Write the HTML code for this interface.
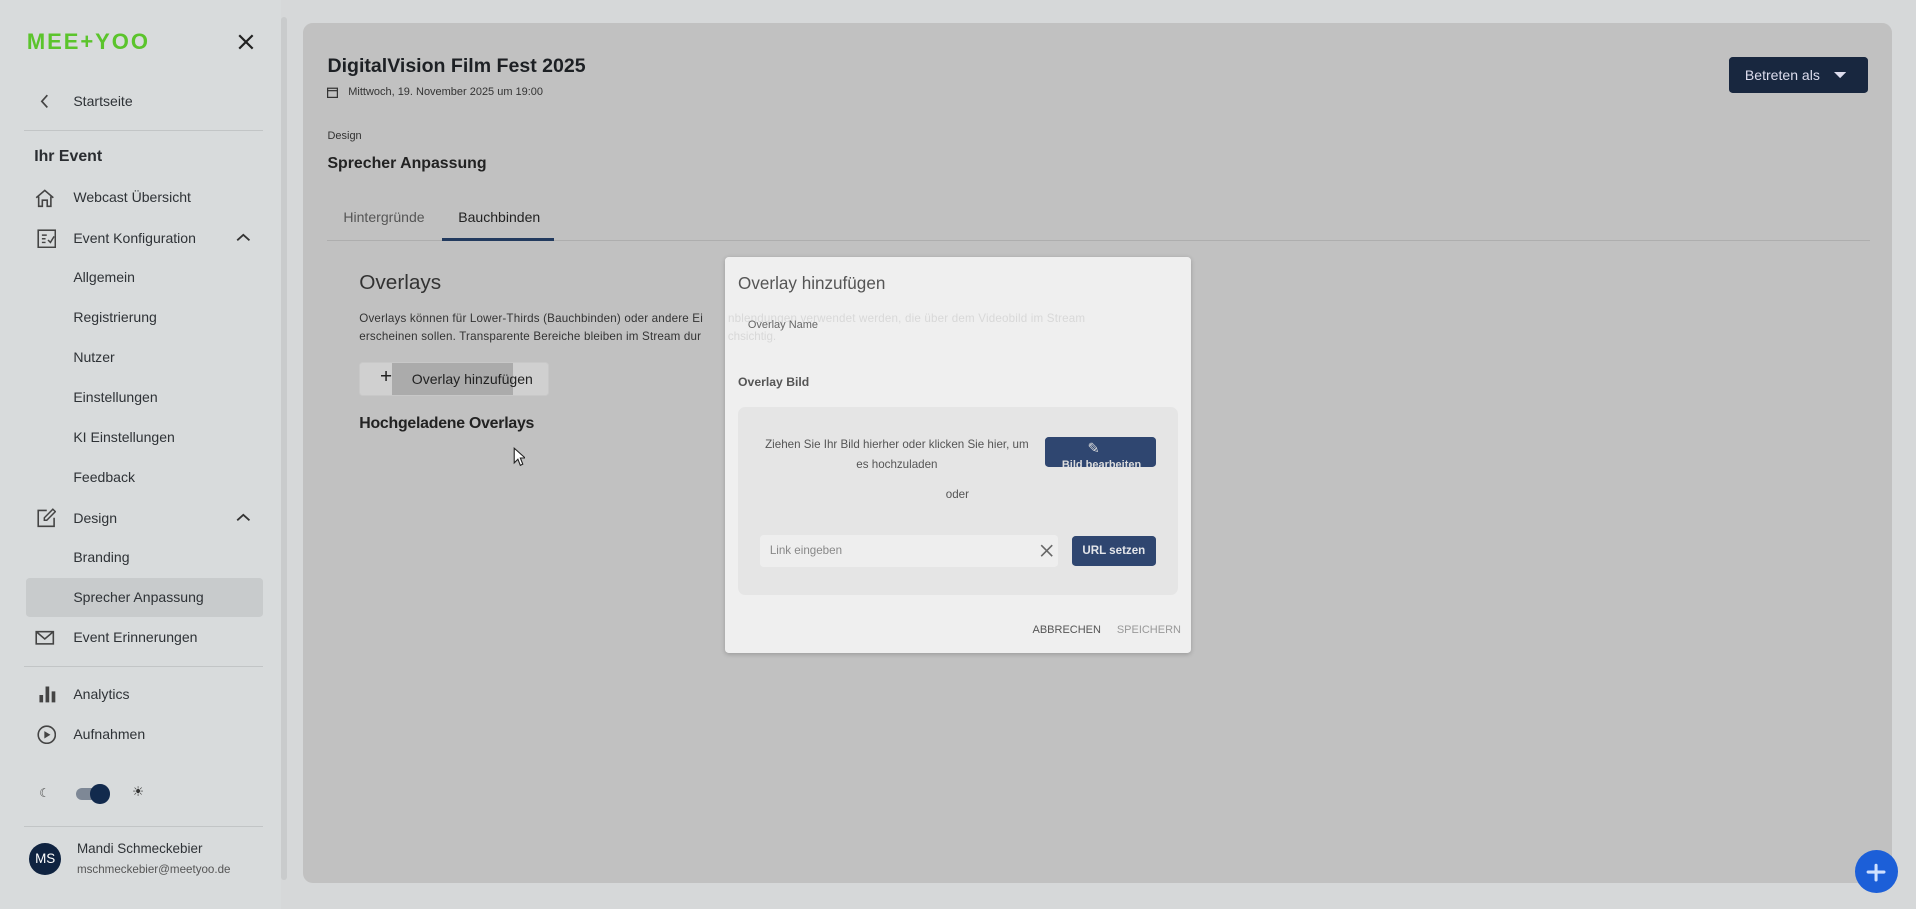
<!DOCTYPE html>
<html><head><meta charset="utf-8"><style>
html,body{margin:0;padding:0;width:1916px;height:909px;overflow:hidden;background:#d6d8d9;}
#w{zoom:1.22194;position:relative;width:1568px;height:744px;font-family:"Liberation Sans",sans-serif;color:#2a2d31;}
.a{position:absolute;white-space:nowrap;}
.si{font-size:11.5px;color:#2e3236;}
.ic{position:absolute;width:16px;height:16px;}
</style></head><body><div id="w">
<div class="a" style="left:0;top:0;width:230px;height:744px;background:#d8dbdc"></div>
<div class="a" style="left:230px;top:14px;width:5px;height:706px;background:#c9cbcc;border-radius:3px"></div>
<div class="a" style="left:22px;top:24px;font-size:18px;font-weight:bold;color:#5bc42c;letter-spacing:1.6px">MEE+YOO</div>
<svg class="a" style="left:195px;top:28px" width="13" height="13" viewBox="0 0 13 13"><path d="M1 1L12 12M12 1L1 12" stroke="#222" stroke-width="1.8"/></svg>
<svg class="a" style="left:33px;top:77px" width="8" height="12"><path d="M6 1L1.5 6L6 11" stroke="#444" stroke-width="1.4" fill="none"/></svg>
<div class="a si" style="left:60px;top:76px">Startseite</div>
<div class="a" style="left:20px;top:106px;width:195px;height:1px;background:#c2c5c6"></div>
<div class="a" style="left:28px;top:121px;font-size:13px;font-weight:bold">Ihr Event</div>
<svg class="ic" style="left:29px;top:154px" viewBox="0 0 16 16"><path d="M1 8L8 2L15 8M3 7V15H6V10H10V15H13V7" stroke="#444" stroke-width="1.3" fill="none"/></svg>
<div class="a si" style="left:60px;top:155px">Webcast Übersicht</div>
<svg class="ic" style="left:30px;top:187px" viewBox="0 0 16 16"><rect x="1" y="1" width="14" height="14" stroke="#444" stroke-width="1.3" fill="none"/><path d="M4 5H8M4 8H7M4 11H7M9 9L11 11L14 6" stroke="#444" stroke-width="1.2" fill="none"/></svg>
<div class="a si" style="left:60px;top:188px">Event Konfiguration</div>
<svg class="a" style="left:193px;top:191px" width="12" height="8"><path d="M1 6L6 1.5L11 6" stroke="#333" stroke-width="1.5" fill="none"/></svg>
<div class="a si" style="left:60px;top:220px">Allgemein</div>
<div class="a si" style="left:60px;top:253px">Registrierung</div>
<div class="a si" style="left:60px;top:286px">Nutzer</div>
<div class="a si" style="left:60px;top:318px">Einstellungen</div>
<div class="a si" style="left:60px;top:351px">KI Einstellungen</div>
<div class="a si" style="left:60px;top:384px">Feedback</div>
<svg class="ic" style="left:30px;top:416px" viewBox="0 0 16 16"><path d="M8 2H1V15H14V8" stroke="#444" stroke-width="1.3" fill="none"/><path d="M13 1L15 3L8 10H6V8Z" stroke="#444" stroke-width="1.2" fill="none"/></svg>
<div class="a si" style="left:60px;top:417px">Design</div>
<svg class="a" style="left:193px;top:420px" width="12" height="8"><path d="M1 6L6 1.5L11 6" stroke="#333" stroke-width="1.5" fill="none"/></svg>
<div class="a si" style="left:60px;top:449px">Branding</div>
<div class="a" style="left:21px;top:473px;width:194px;height:32px;background:#c8cbcc;border-radius:3px"></div>
<div class="a si" style="left:60px;top:482px">Sprecher Anpassung</div>
<svg class="ic" style="left:29px;top:514px" viewBox="0 0 16 16"><rect x="1" y="3" width="14" height="10" stroke="#444" stroke-width="1.3" fill="none"/><path d="M1 3L8 9L15 3" stroke="#444" stroke-width="1.3" fill="none"/></svg>
<div class="a si" style="left:60px;top:515px">Event Erinnerungen</div>
<div class="a" style="left:20px;top:545px;width:195px;height:1px;background:#c2c5c6"></div>
<svg class="ic" style="left:30px;top:560px" viewBox="0 0 16 16"><path d="M2 15V9H5V15ZM7 15V2H10V15ZM12 15V6H15V15Z" fill="#444"/></svg>
<div class="a si" style="left:60px;top:561px">Analytics</div>
<svg class="ic" style="left:30px;top:593px" viewBox="0 0 16 16"><circle cx="8" cy="8" r="7" stroke="#444" stroke-width="1.3" fill="none"/><path d="M6 5L11 8L6 11Z" fill="#444"/></svg>
<div class="a si" style="left:60px;top:594px">Aufnahmen</div>
<div class="a" style="left:32px;top:643px;font-size:10px;color:#444">☾</div>
<div class="a" style="left:62px;top:645px;width:26px;height:10px;border-radius:5px;background:#7e8896"></div>
<div class="a" style="left:74px;top:642px;width:16px;height:16px;border-radius:50%;background:#122a4d"></div>
<div class="a" style="left:108px;top:642px;font-size:11px;color:#333">☀</div>
<div class="a" style="left:20px;top:676px;width:195px;height:1px;background:#c2c5c6"></div>
<div class="a" style="left:24px;top:690px;width:26px;height:26px;border-radius:50%;background:#0f2340;color:#fff;font-size:11px;line-height:26px;text-align:center">MS</div>
<div class="a" style="left:63px;top:688px;font-size:11px;color:#2e3236">Mandi Schmeckebier</div>
<div class="a" style="left:63px;top:706px;font-size:9.5px;color:#555">mschmeckebier@meetyoo.de</div>
<div class="a" style="left:248px;top:19px;width:1300px;height:704px;background:#c1c1c1;border-radius:8px"></div>
<div class="a" style="left:268px;top:45px;font-size:16px;font-weight:bold;color:#1d2024">DigitalVision Film Fest 2025</div>
<svg class="a" style="left:268px;top:71px" width="9" height="9"><rect x="0.5" y="1" width="8" height="7.5" stroke="#333" fill="none"/><path d="M0.5 3H8.5" stroke="#333"/></svg>
<div class="a" style="left:285px;top:70px;font-size:9px;color:#333">Mittwoch, 19. November 2025 um 19:00</div>
<div class="a" style="left:1415px;top:47px;width:114px;height:29px;background:#18273f;border-radius:3px"></div>
<div class="a" style="left:1428px;top:55px;font-size:11.5px;color:#dde">Betreten als</div>
<svg class="a" style="left:1501px;top:59px" width="10" height="6"><path d="M0 0H10L5 5Z" fill="#dde"/></svg>
<div class="a" style="left:268px;top:106px;font-size:9px;color:#333">Design</div>
<div class="a" style="left:268px;top:127px;font-size:13px;font-weight:bold;color:#222">Sprecher Anpassung</div>
<div class="a" style="left:281px;top:171px;font-size:11.5px;color:#555">Hintergründe</div>
<div class="a" style="left:375px;top:171px;font-size:11.5px;color:#222">Bauchbinden</div>
<div class="a" style="left:268px;top:196px;width:1262px;height:1px;background:#aeaeae"></div>
<div class="a" style="left:362px;top:195px;width:91px;height:2px;background:#223a5e"></div>
<div class="a" style="left:294px;top:222px;font-size:17px;color:#333">Overlays</div>
<div class="a" style="left:294px;top:255px;font-size:9.5px;color:#333;letter-spacing:0.15px">Overlays können für Lower-Thirds (Bauchbinden) oder andere Ei</div>
<div class="a" style="left:294px;top:270px;font-size:9.5px;color:#333;letter-spacing:0.15px">erscheinen sollen. Transparente Bereiche bleiben im Stream dur</div>
<div class="a" style="left:294px;top:296px;width:155px;height:28px;background:#d0d0d0;border-radius:3px;border:1px solid #c8c8c8;box-sizing:border-box"></div>
<div class="a" style="left:321px;top:297px;width:99px;height:26px;background:#ababab"></div>
<div class="a" style="left:311px;top:299px;font-size:17px;color:#222">+</div>
<div class="a" style="left:337px;top:304px;font-size:11.5px;color:#222">Overlay hinzufügen</div>
<div class="a" style="left:294px;top:340px;font-size:13px;font-weight:bold;color:#222;letter-spacing:-0.2px">Hochgeladene Overlays</div>
<svg class="a" style="left:420px;top:366px" width="10" height="16"><path d="M1 1V13L4 10L6 15L8 14L6 9H10Z" fill="#fff" stroke="#222" stroke-width="0.9"/></svg>
<div class="a" style="left:593px;top:210px;width:382px;height:324px;background:#efefef;border-radius:3px;box-shadow:0 1px 4px rgba(0,0,0,.2)"></div>
<div class="a" style="left:593px;top:255px;width:315px;font-size:9.5px;color:#d8d8d8;overflow:hidden;letter-spacing:0.15px">&nbsp;nblendungen verwendet werden, die über dem Videobild im Stream</div>
<div class="a" style="left:593px;top:270px;font-size:9.5px;color:#d8d8d8">&nbsp;chsichtig.</div>
<div class="a" style="left:604px;top:224px;font-size:14px;color:#555">Overlay hinzufügen</div>
<div class="a" style="left:612px;top:261px;font-size:9px;color:#666">Overlay Name</div>
<div class="a" style="left:604px;top:307px;font-size:10px;font-weight:bold;color:#555">Overlay Bild</div>
<div class="a" style="left:604px;top:333px;width:360px;height:154px;background:#e5e5e5;border-radius:6px"></div>
<div class="a" style="left:620px;top:356px;width:228px;text-align:center;font-size:9.5px;color:#555;line-height:16px;white-space:normal">Ziehen Sie Ihr Bild hierher oder klicken Sie hier, um es hochzuladen</div>
<div class="a" style="left:855px;top:358px;width:91px;height:24px;background:#2f4670;border-radius:3px;overflow:hidden"><div style="position:absolute;left:35px;top:2px;color:#ddd;font-size:12px">✎</div><div style="position:absolute;left:14px;top:18px;font-size:9px;color:#ddd;font-weight:bold">Bild bearbeiten</div></div>
<div class="a" style="left:774px;top:399px;font-size:9.5px;color:#555">oder</div>
<div class="a" style="left:622px;top:438px;width:244px;height:26px;background:#eeeeee;border-radius:3px"></div>
<div class="a" style="left:630px;top:445px;font-size:9.5px;color:#888">Link eingeben</div>
<svg class="a" style="left:851px;top:445px" width="11" height="11"><path d="M1 1L10 10M10 1L1 10" stroke="#666" stroke-width="1.3"/></svg>
<div class="a" style="left:877px;top:439px;width:69px;height:24px;background:#2f4670;border-radius:3px;color:#e4e6ea;font-size:9.5px;font-weight:bold;text-align:center;line-height:24px">URL setzen</div>
<div class="a" style="left:845px;top:511px;font-size:9px;color:#555">ABBRECHEN</div>
<div class="a" style="left:914px;top:511px;font-size:9px;color:#999">SPEICHERN</div>
<div class="a" style="left:1518px;top:696px;width:35px;height:35px;border-radius:50%;background:#1c5fd8"></div>
<svg class="a" style="left:1524px;top:702px" width="23" height="23"><path d="M5 11.5H18M11.5 6V18" stroke="#cfe0ff" stroke-width="2.5" stroke-linecap="round"/></svg>
</div></body></html>
